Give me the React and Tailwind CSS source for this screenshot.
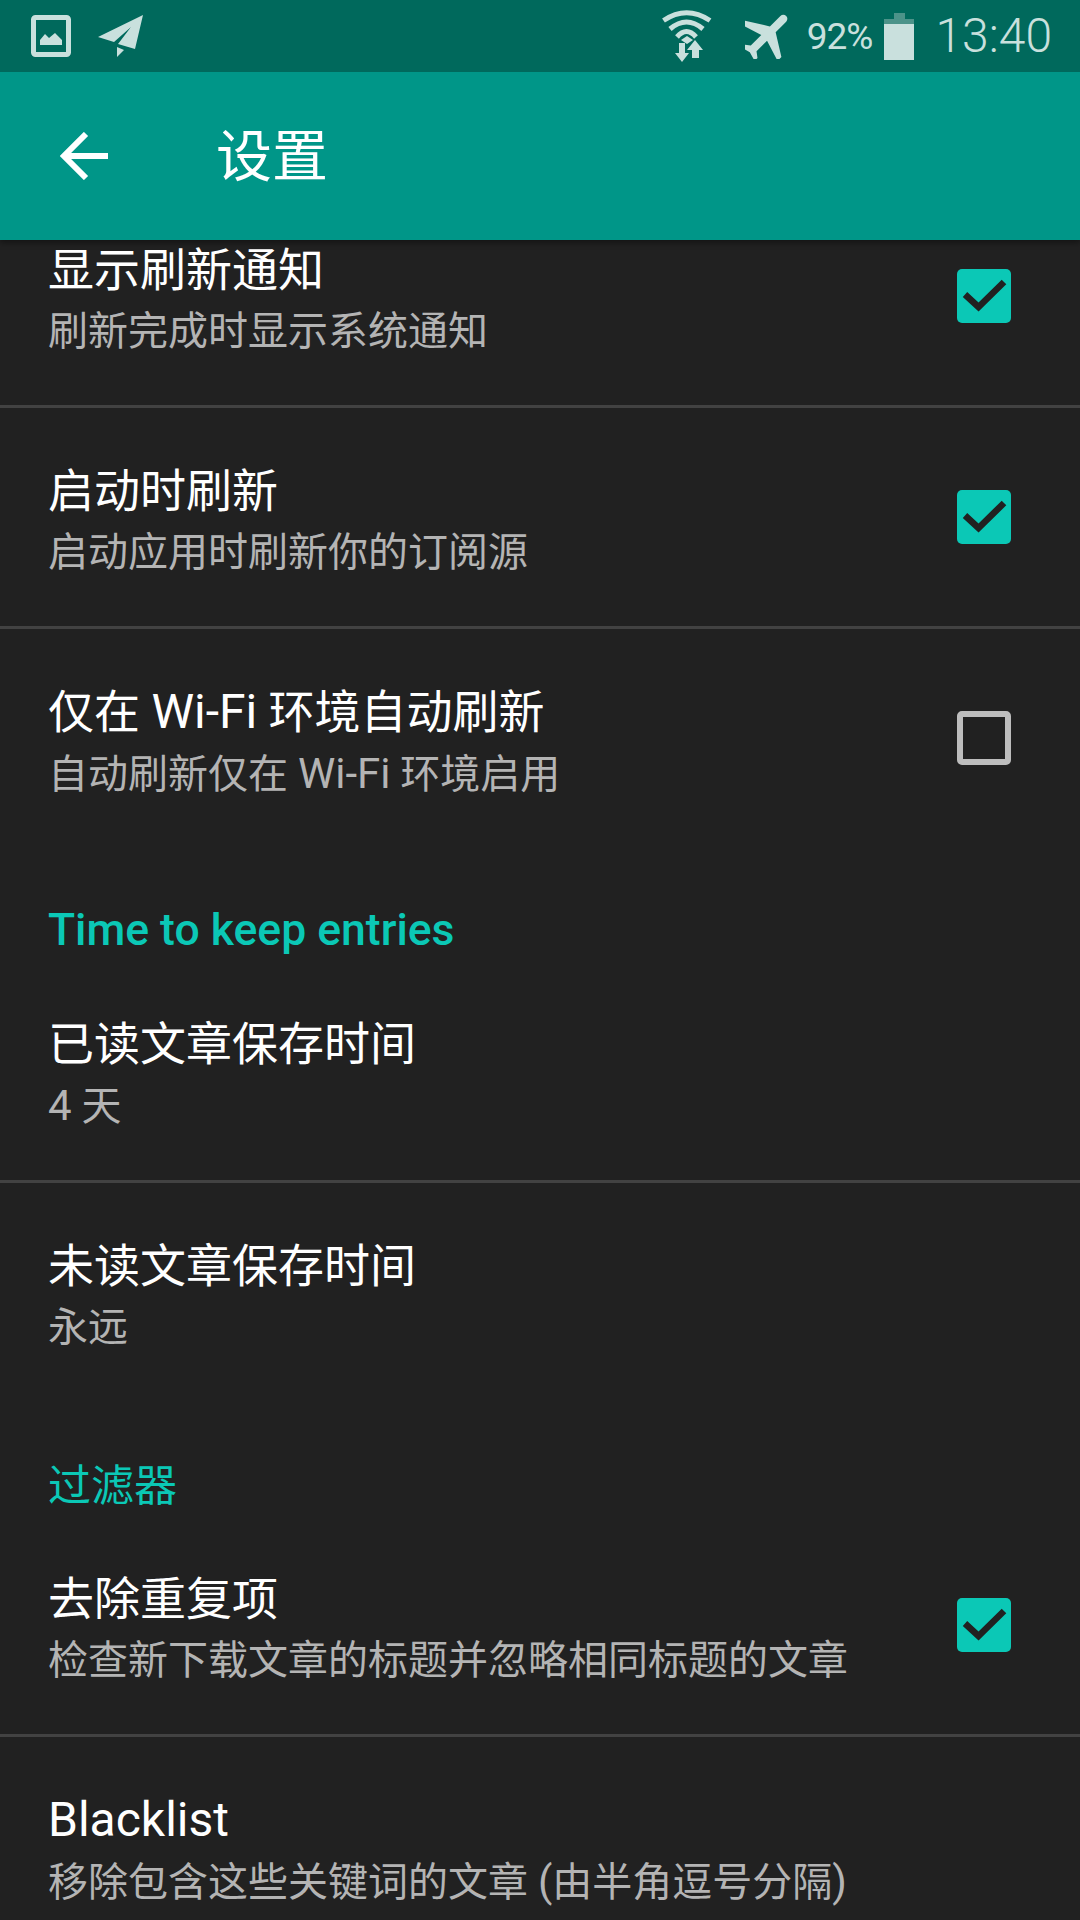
function Check({ on }) {
  if (!on) {
    return <div className="w-[54px] h-[54px] shrink-0 rounded-[5px] border-[6px] border-[#bdbdbd]"></div>;
  }
  return (
    <div className="w-[54px] h-[54px] shrink-0 rounded-[5px] bg-[#0bc8b6] flex items-center justify-center">
      <svg width="54" height="54" viewBox="0 0 54 54" fill="none">
        <path d="M8 25.5L21.5 38L47 13" stroke="#212121" strokeWidth="6.5" />
      </svg>
    </div>
  );
}

function Row({ title, summary, check, divider = true }) {
  return (
    <div className={`h-[221px] pl-[48px] pr-[69px] flex items-center justify-between border-b-[3px] ${divider ? "border-[#424242]" : "border-transparent"}`}>
      <div className="flex flex-col pt-[9px]">
        <div className="text-[46px] leading-[61px] text-white whitespace-nowrap">{title}</div>
        <div className="text-[40px] leading-[61px] text-[#b4b4b4] whitespace-nowrap">{summary}</div>
      </div>
      {check !== undefined && <Check on={check} />}
    </div>
  );
}

// latin text is a little bigger than the CJK text around it
function TitleLatin({ children }) {
  return <span className="text-[48px]">{children}</span>;
}

function SummaryLatin({ children }) {
  return <span className="text-[42px]">{children}</span>;
}

function StatusBar() {
  return (
    <div className="h-[72px] bg-[#00695c] flex items-center pl-[31px] pr-[28px] text-[#c9e0dd]">
      {/* picture */}
      <svg width="40" height="42" viewBox="0 0 40 42" fill="none">
        <rect x="2.5" y="2.5" width="35" height="37" rx="2" stroke="#c9e0dd" strokeWidth="5" />
        <path d="M9 30V25L14 19L18 23L24 18L31 25V30Z" fill="#c9e0dd" />
      </svg>
      {/* paper plane */}
      <svg className="ml-[27px]" width="46" height="42" viewBox="0 0 46 42">
        <path d="M0 22L45 0L37 34L20 29L33 12L16 27Z" fill="#c9e0dd" />
        <path d="M19 32L26 35L19 42Z" fill="#c9e0dd" />
      </svg>
      <div className="flex-1"></div>
      {/* wifi with data arrows */}
      <svg width="50" height="54" viewBox="0 0 50 54" fill="none">
        <path d="M1.5 11.5Q24.5 -4 48 11.5" stroke="#c9e0dd" strokeWidth="5" />
        <path d="M8 20Q24.5 6 41 20" stroke="#c9e0dd" strokeWidth="5" />
        <path d="M15 28Q24.5 17 34 28" stroke="#c9e0dd" strokeWidth="5" />
        <path d="M25 27L31 31L25 35L19 31Z" fill="#c9e0dd" />
        <path d="M17 34H23V44H27L20 53L13 44H17Z" fill="#c9e0dd" />
        <path d="M33 31L41 41H37V49H30V41H25Z" fill="#c9e0dd" />
      </svg>
      {/* airplane */}
      <svg className="ml-[33px]" width="46" height="46" viewBox="3.5 3.5 17 17">
        <g transform="rotate(45 12 12)">
          <path d="M21 16v-2l-8-5V3.5c0-.83-.67-1.5-1.5-1.5S10 2.67 10 3.5V9l-8 5v2l8-2.5V19l-2 1.5V22l3.5-1 3.5 1v-1.5L13 19v-5.5l8 2.5z" fill="#c9e0dd" />
        </g>
      </svg>
      <div className="ml-[16px] text-[37px] leading-none tracking-[-1px]">92%</div>
      {/* battery */}
      <div className="ml-[12px] flex flex-col items-center w-[30px]">
        <div className="w-[11px] h-[6px] bg-[#4c9389]"></div>
        <div className="w-[30px] h-[5px] bg-[#4c9389]"></div>
        <div className="w-[30px] h-[36px] bg-[#c9e0dd]"></div>
      </div>
      <div className="ml-[21px] text-[48px] leading-none font-light">13:40</div>
    </div>
  );
}

export default function App() {
  return (
    <div
      className="w-[1080px] h-[1920px] overflow-hidden bg-[#212121] flex flex-col"
      style={{ fontFamily: 'Roboto, "Noto Sans CJK SC", sans-serif' }}
    >
      <div className="relative z-10 shrink-0 shadow-[0_3px_6px_rgba(0,0,0,0.4)]">
        <StatusBar />
        <div className="h-[168px] bg-[#009688] flex items-center pl-[60px]">
          <svg width="48" height="48" viewBox="0 0 48 48" fill="none">
            <path d="M48 24H4M26 2L4 24L26 46" stroke="#fff" strokeWidth="6" />
          </svg>
          <div className="ml-[108px] pt-[2px] text-[56px] leading-none text-white">设置</div>
        </div>
      </div>

      <div className="-mt-[53px]">
        <Row title="显示刷新通知" summary="刷新完成时显示系统通知" check={true} />
        <Row title="启动时刷新" summary="启动应用时刷新你的订阅源" check={true} />
        <Row
          title={<>仅在 <TitleLatin>Wi-Fi</TitleLatin> 环境自动刷新</>}
          summary={<>自动刷新仅在 <SummaryLatin>Wi-Fi</SummaryLatin> 环境启用</>}
          check={false}
          divider={false}
        />
        <div className="h-[112px] pl-[48px] pt-[54px] text-[44.5px] leading-[52px] font-medium text-[#0bc8b6]">
          Time to keep entries
        </div>
        <Row title="已读文章保存时间" summary={<><SummaryLatin>4</SummaryLatin> 天</>} />
        <Row title="未读文章保存时间" summary="永远" divider={false} />
        <div className="h-[112px] pl-[48px] pt-[56px] text-[43px] leading-[52px] text-[#0bc8b6]">过滤器</div>
        <Row title="去除重复项" summary="检查新下载文章的标题并忽略相同标题的文章" check={true} />
        <Row
          title={<TitleLatin>Blacklist</TitleLatin>}
          summary={<>移除包含这些关键词的文章 <SummaryLatin>(</SummaryLatin>由半角逗号分隔<SummaryLatin>)</SummaryLatin></>}
        />
      </div>
    </div>
  );
}
